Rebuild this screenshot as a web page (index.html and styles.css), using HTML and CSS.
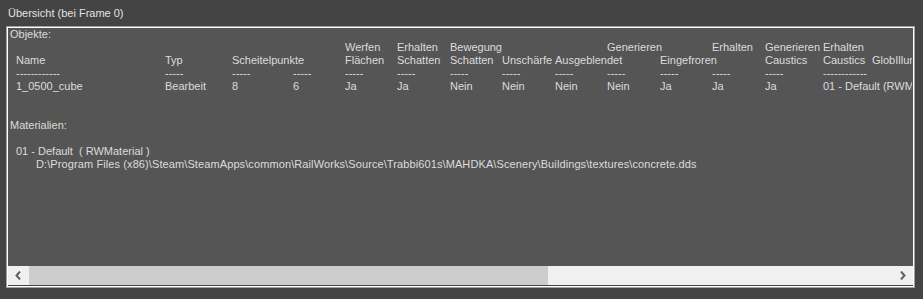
FILE: index.html
```html
<!DOCTYPE html>
<html lang="de">
<head>
  <meta charset="UTF-8" />
  <title>Übersicht</title>
  <link rel="stylesheet" href="styles.css">
</head>
<body>
  <div class="title">Übersicht (bei Frame 0)</div>

  <div class="frame">
    <div class="content">
      <div class="line label">Objekte:</div>

      <!-- Objekt-Tabelle -->
      <div class="table">
        <span></span><span></span><span></span><span></span>
        <span>Werfen</span><span>Erhalten</span><span>Bewegung</span><span></span><span></span>
        <span>Generieren</span><span></span><span>Erhalten</span><span>Generieren</span><span>Erhalten</span><span></span>

        <span>Name</span><span>Typ</span><span>Scheitelpunkte</span><span></span>
        <span>Flächen</span><span>Schatten</span><span>Schatten</span><span>Unschärfe</span><span>Ausgeblendet</span>
        <span></span><span>Eingefroren</span><span></span><span>Caustics</span><span>Caustics</span><span>GlobIllum</span>

        <span>------------</span><span>-----</span><span>-----</span><span>-----</span>
        <span>-----</span><span>-----</span><span>-----</span><span>-----</span><span>-----</span>
        <span>-----</span><span>-----</span><span>-----</span><span>-----</span><span>------------</span><span></span>

        <span>1_0500_cube</span><span>Bearbeit</span><span>8</span><span>6</span>
        <span>Ja</span><span>Ja</span><span>Nein</span><span>Nein</span><span>Nein</span>
        <span>Nein</span><span>Ja</span><span>Ja</span><span>Ja</span><span>01 - Default (RWMaterial)</span><span></span>
      </div>

      <div class="line"></div>
      <div class="line"></div>
      <div class="line label">Materialien:</div>
      <div class="line"></div>
      <div class="line material">01 - Default&nbsp; ( RWMaterial )</div>
      <div class="line path">D:\Program Files (x86)\Steam\SteamApps\common\RailWorks\Source\Trabbi601s\MAHDKA\Scenery\Buildings\textures\concrete.dds</div>
    </div>

    <div class="scrollbar">
      <div class="arrow">
        <svg width="7" height="9" viewBox="0 0 7 9"><path d="M5 0.5 L1.5 4.5 L5 8.5" fill="none" stroke="#606060" stroke-width="2"/></svg>
      </div>
      <div class="thumb"></div>
      <div class="track"></div>
      <div class="arrow">
        <svg width="7" height="9" viewBox="0 0 7 9"><path d="M2 0.5 L5.5 4.5 L2 8.5" fill="none" stroke="#606060" stroke-width="2"/></svg>
      </div>
    </div>
  </div>
</body>
</html>
```

FILE: styles.css
```css
* {
  box-sizing: border-box;
  margin: 0;
  padding: 0;
}

body {
  background: #444444;
  color: #dcdcdc;
  font-family: 'Liberation Sans', Arial, sans-serif;
  font-size: 11px;
  line-height: 13px;
  width: 923px;
  height: 299px;
  overflow: hidden;
}

.title {
  padding: 7px 0 0 8px;
  height: 20px;
  color: #e2e2e2;
}

.frame {
  margin: 6px 8px 0 6px;
  height: 262px;
  border: 1px solid #a0a0a0;
  box-shadow: inset 0 0 0 1px #ffffff;
  padding: 1px;
  display: flex;
  flex-direction: column;
}

.content {
  background: #555555;
  height: 238px;
  padding-left: 2px;
  overflow: hidden;
  white-space: nowrap;
}

.line {
  height: 13px;
}

.table {
  display: grid;
  grid-template-columns: 149px 67px 61px 52px 52px 53px 52px 53px 52px 53px 52px 53px 58px 49px 40px;
  grid-auto-rows: 13px;
  padding-left: 6px;
  width: 902px;
  overflow: hidden;
}

.table span {
  white-space: nowrap;
}

.material {
  padding-left: 6px;
}

.path {
  padding-left: 26px;
  letter-spacing: 0.1px;
}

.scrollbar {
  display: flex;
  height: 19px;
  background: #f0f0f0;
}

.arrow {
  width: 21px;
  display: flex;
  align-items: center;
  justify-content: center;
}

.thumb {
  width: 519px;
  background: #cdcdcd;
}

.track {
  flex: 1;
}
```
